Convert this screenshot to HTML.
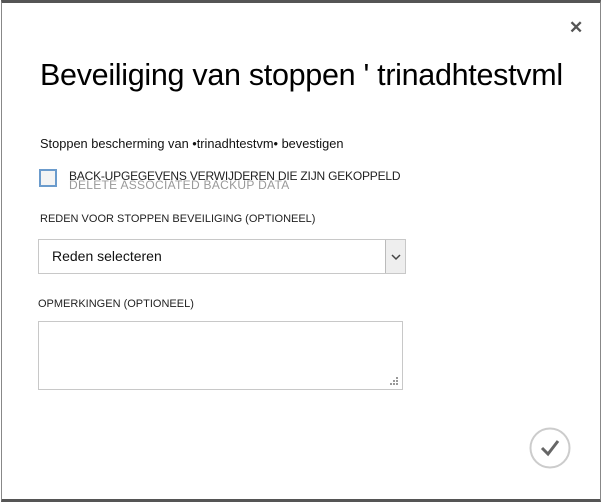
<!DOCTYPE html>
<html><head><style>
*{margin:0;padding:0;box-sizing:border-box}
body{width:603px;height:502px;background:#fff;font-family:"Liberation Sans",Arial,sans-serif;position:relative;overflow:hidden}
.frame{position:absolute;left:1px;top:0;width:600px;height:502px;border-top:3px solid #555;border-left:1px solid #888;border-right:1px solid #888;border-bottom:3px solid #555}
.abs{position:absolute;white-space:nowrap}
</style></head><body>
<div class="frame"></div>
<div class="abs" style="left:569px;top:18px;font-size:17px;font-weight:bold;color:#555">✕</div>
<div class="abs" style="left:40px;top:58px;font-size:30.5px;color:#000;letter-spacing:-0.3px">Beveiliging van stoppen ' trinadhtestvml</div>
<div class="abs" style="left:40px;top:136px;font-size:12.8px;color:#111">Stoppen bescherming van •trinadhtestvm• bevestigen</div>
<div class="abs" style="left:39px;top:169px;width:18px;height:18px;border:2px solid #6b9bcc;background:#f4f4f4"></div>
<div class="abs" style="left:69px;top:178px;font-size:12px;color:#999;letter-spacing:0.3px">DELETE ASSOCIATED BACKUP DATA</div>
<div class="abs" style="left:69px;top:169px;font-size:12px;color:#222;letter-spacing:-0.2px">BACK-UPGEGEVENS VERWIJDEREN DIE ZIJN GEKOPPELD</div>
<div class="abs" style="left:40px;top:213px;font-size:11px;color:#222">REDEN VOOR STOPPEN BEVEILIGING (OPTIONEEL)</div>
<div class="abs" style="left:38px;top:239px;width:368px;height:35px;border:1px solid #c8c8c8;background:#fff"></div>
<div class="abs" style="left:385px;top:240px;width:20px;height:33px;border-left:1px solid #bbb;background:#eee"><svg width="20" height="33"><path d="M6 15 L10 19 L14 15" fill="none" stroke="#444" stroke-width="1.5"/></svg></div>
<div class="abs" style="left:52px;top:248px;font-size:14px;color:#111">Reden selecteren</div>
<div class="abs" style="left:38px;top:298px;font-size:11px;color:#222">OPMERKINGEN (OPTIONEEL)</div>
<div class="abs" style="left:38px;top:321px;width:365px;height:69px;border:1px solid #c8c8c8"></div>
<svg class="abs" style="left:388px;top:375px" width="12" height="12"><g fill="#999"><rect x="8" y="2" width="2" height="2"/><rect x="5" y="5" width="2" height="2"/><rect x="8" y="5" width="2" height="2"/><rect x="2" y="8" width="2" height="2"/><rect x="5" y="8" width="2" height="2"/><rect x="8" y="8" width="2" height="2"/></g></svg>
<svg class="abs" style="left:529px;top:427px" width="44" height="44"><circle cx="21" cy="21" r="19.5" fill="#fff" stroke="#ccc" stroke-width="2"/><path d="M13 21 L19 27 L29 14" fill="none" stroke="#666" stroke-width="3"/></svg>
</body></html>
